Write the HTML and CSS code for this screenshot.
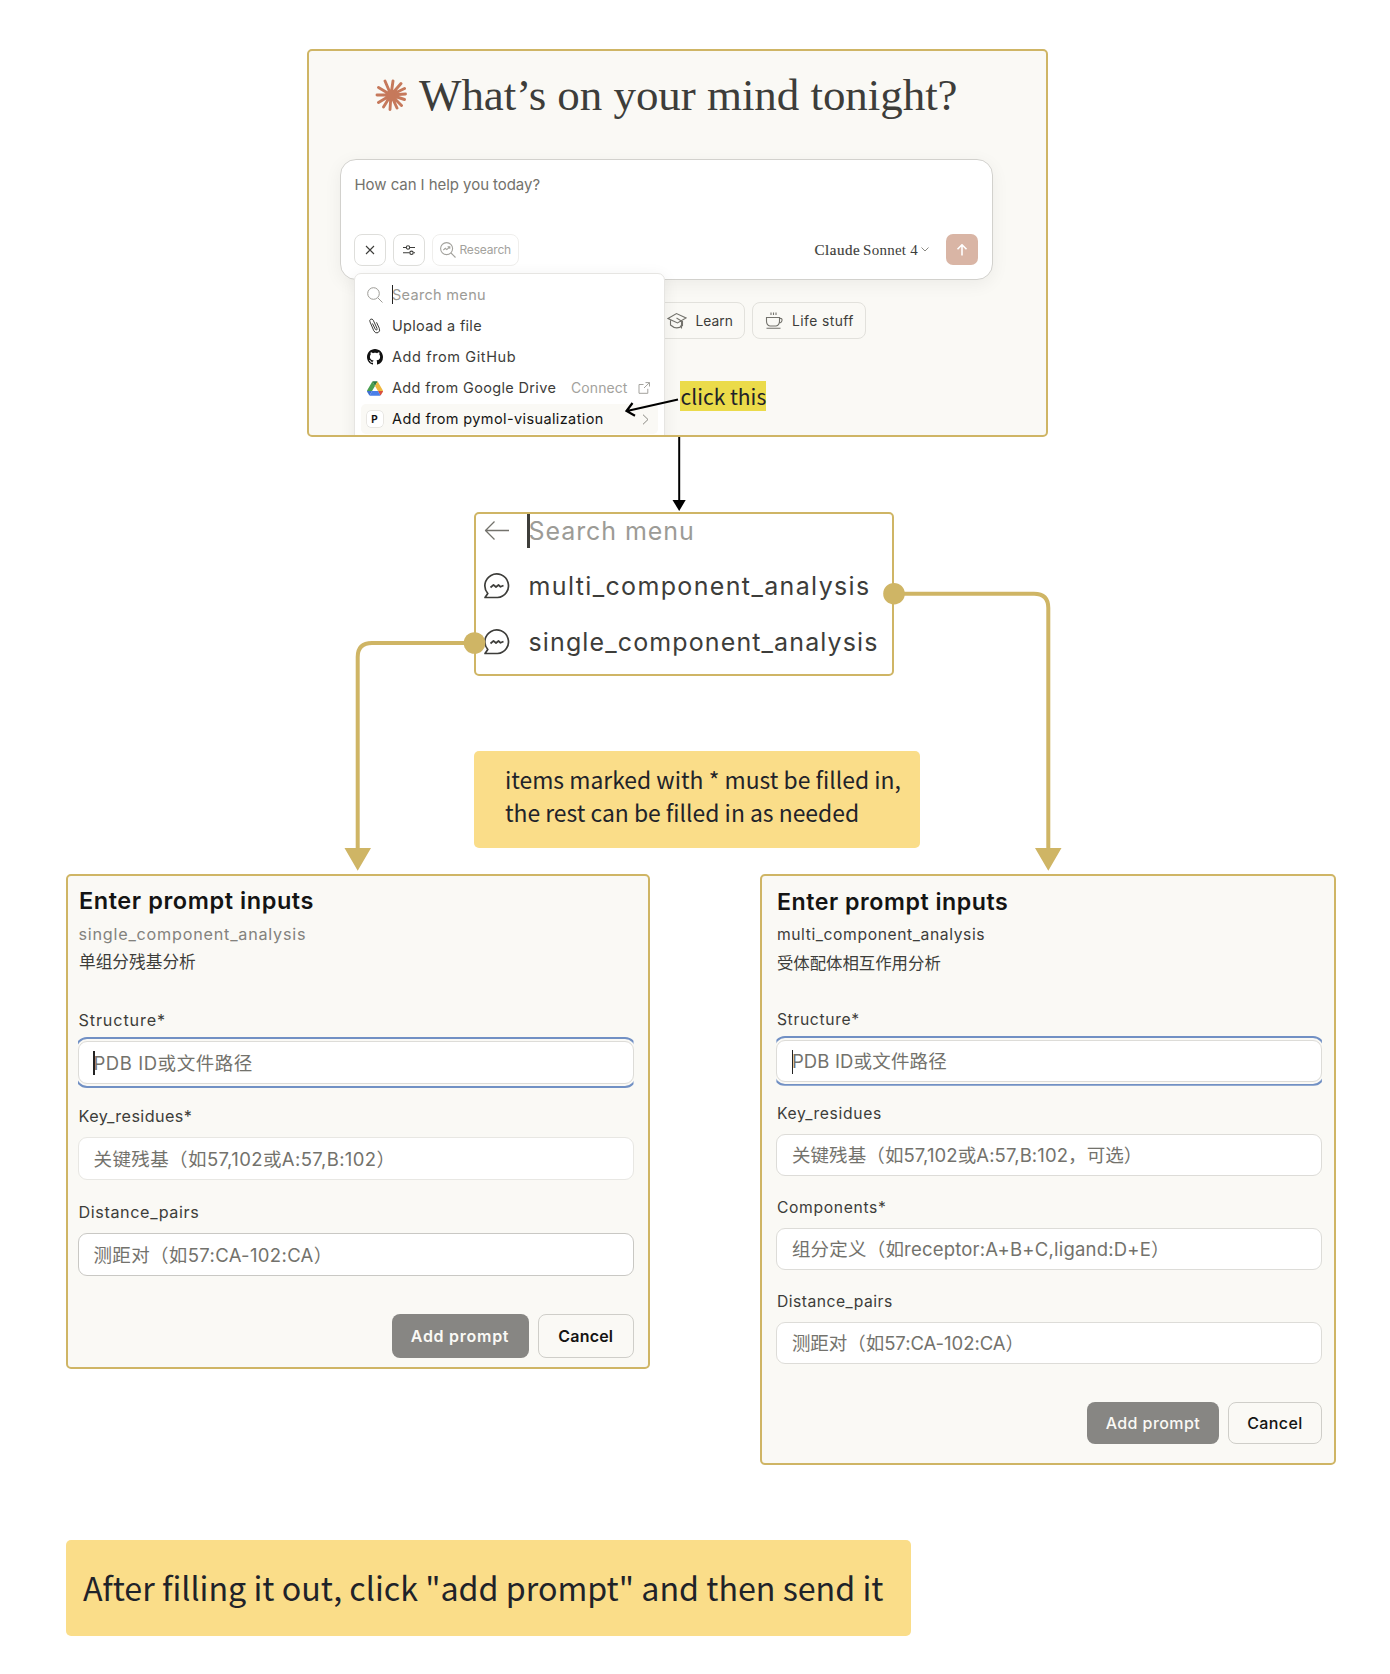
FILE: index.html
```html
<!DOCTYPE html>
<html lang="en">
<head>
<meta charset="utf-8">
<title>Prompt guide</title>
<link rel="stylesheet" href="styles.css">
</head>
<body>
<main class="canvas">
  <section class="node chat">
    <h1 class="greeting">
      <svg class="burst" viewBox="-16 -16 32 32" width="32" height="32" stroke="#c6795b" stroke-width="2.9" stroke-linecap="round"><path d="M0 0L-6-14M0 0L2-14M0 0L10-11.500M0 0L13.500-6.500M0 0L14.500-1M0 0L13.500 4.500M0 0L10.500 10.500M0 0L6 13M0 0L-1 14.500M0 0L-7.500 12M0 0L-12.500 7.500M0 0L-14 0M0 0L-12.500-7.500" /><circle r="4" fill="#c6795b" stroke="none"/></svg>
      <span class="t-greet">What’s on your mind tonight?</span>
    </h1>
    <div class="composer">
      <div class="ask"><span class="t-ask">How can I help you today?</span></div>
      <div class="tools">
        <span class="tool"><svg viewBox="0 0 12 12" width="12" height="12"><path d="M2 2L10 10M10 2L2 10"/></svg></span>
        <span class="tool"><svg viewBox="0 0 14 12" width="14" height="12"><path d="M1 3.500H4M8 3.500H13M1 8.800H7.500M11.500 8.800H13"/><circle cx="6" cy="3.500" r="1.700"/><circle cx="9.500" cy="8.800" r="1.700"/></svg></span>
        <span class="tool research"><svg viewBox="0 0 16 16" width="16" height="16"><circle cx="6.600" cy="6.600" r="6"/><path d="M11 11L15.500 15.500M3.300 8.200L5.300 6.300L6.800 7.600L9.600 5M7.600 4.700H9.800V6.800"/></svg><span class="t-research">Research</span></span>
        <span class="model"><span class="t-claude">Claude</span><span class="t-sonnet">Sonnet 4</span><svg viewBox="0 0 8 5" width="8" height="5"><path d="M.5.5L4 4L7.500.5"/></svg></span>
        <span class="send"><svg viewBox="0 0 12 12" width="12" height="12"><path d="M6 11.500V1M1.500 5.300L6 .8L10.500 5.300"/></svg></span>
      </div>
    </div>
    <div class="chips">
      <span class="chip learn"><svg viewBox="0 0 20 18" width="20" height="18"><path d="M1 6.500L9.500 1.500L19 6L10.500 11ZM3.500 8.500V13Q9.500 18.500 15.500 13.500V9M9.500 6L14.500 9V16.500M13.500 13.500V15.500"/></svg><span class="t-learn">Learn</span></span>
      <span class="chip"><svg viewBox="0 0 18 17" width="18" height="17"><path d="M1.500 5.500H14.500V9Q14.500 13.500 11 14H5Q1.500 13.500 1.500 9ZM14.500 6.500Q17.500 6 17 8.500Q16.500 11 14 11M1.500 16.200H15.500M6 .5V3M8.500.5V3M11 .5V3"/></svg><span class="t-life">Life stuff</span></span>
    </div>
    <div class="menu">
      <div class="item search"><svg viewBox="0 0 16 16" width="16" height="16"><circle cx="6.500" cy="6.500" r="5.800"/><path d="M10.800 10.800L15.500 15.500"/></svg><i class="caret"></i><span class="t-search">Search menu</span></div>
      <div class="item"><svg viewBox="0 0 16 16" width="16" height="16"><path d="M5.500 5.500L8.300 11.300Q8.900 12.300 9.700 11.900Q10.400 11.400 10 10.400L6.300 2.300Q5.300.4 3.700 1.200Q2.200 2 3 3.900L6.800 12.800Q8.400 15.800 11 14.700Q13.500 13.300 12.300 10.300L9.500 4.300"/></svg><span class="t-upload">Upload a file</span></div>
      <div class="item"><svg class="solid" viewBox="0 0 16 16" width="16" height="16"><path d="M8 0C3.580 0 0 3.580 0 8c0 3.540 2.290 6.530 5.470 7.590.4.070.55-.17.55-.38 0-.19-.01-.82-.01-1.490-2.010.37-2.530-.49-2.690-.94-.09-.23-.48-.94-.82-1.130-.28-.15-.68-.52-.01-.53.63-.01 1.080.58 1.230.82.72 1.210 1.870.87 2.330.66.07-.52.28-.87.51-1.070-1.780-.2-3.640-.89-3.640-3.950 0-.87.31-1.590.82-2.150-.08-.2-.36-1.020.08-2.120 0 0 .67-.21 2.200.82.64-.18 1.320-.27 2-.27s1.360.09 2 .27c1.530-1.040 2.200-.82 2.200-.82.44 1.100.16 1.920.08 2.120.51.56.82 1.270.82 2.150 0 3.070-1.870 3.750-3.650 3.950.29.25.54.73.54 1.480 0 1.070-.01 1.930-.01 2.200 0 .21.15.46.55.38A8.010 8.010 0 0 0 16 8c0-4.420-3.580-8-8-8z"/></svg><span class="t-github">Add from GitHub</span></div>
      <div class="item"><svg class="drive" viewBox="0 0 87.300 78" width="16" height="15"><path d="m6.600 66.850 3.850 6.650c.8 1.400 1.950 2.500 3.300 3.300l13.750-23.800h-27.500c0 1.550.4 3.100 1.200 4.500z" fill="#3f6fd0"/><path d="m43.650 25-13.750-23.800c-1.350.8-2.500 1.900-3.300 3.300l-25.400 44a9 9 0 0 0-1.200 4.500h27.500z" fill="#4a9f50"/><path d="m73.550 76.800c1.350-.8 2.500-1.900 3.300-3.300l1.600-2.750 7.650-13.250c.8-1.400 1.200-2.950 1.200-4.500h-27.500l5.850 11.500z" fill="#d9503f"/><path d="m43.650 25 13.750-23.800c-1.350-.8-2.900-1.200-4.500-1.200h-18.500c-1.600 0-3.150.45-4.500 1.200z" fill="#2c7a3f"/><path d="m59.800 53h-32.300l-13.750 23.800c1.350.8 2.900 1.200 4.500 1.200h50.800c1.600 0 3.150-.45 4.500-1.200z" fill="#4a7fe8"/><path d="m73.400 26.500-12.700-22c-.8-1.400-1.950-2.500-3.300-3.300l-13.750 23.800 16.150 28h27.450c0-1.550-.4-3.100-1.200-4.500z" fill="#eeb83f"/></svg><span class="t-drive">Add from Google Drive</span><span class="connect"><span class="t-connect">Connect</span><svg viewBox="0 0 12 12" width="12" height="12"><path d="M5.500 2.500H1V11.300H9.800V6.800M7.500.6H11.500V4.500M11.500.6L6 6"/></svg></span></div>
      <div class="item active"><b class="pbox">P</b><span class="t-pymol">Add from pymol-visualization</span><svg class="go" viewBox="0 0 7 11" width="7" height="11"><path d="M1 .7L6 5.500L1 10.300"/></svg></div>
    </div>
  </section>

  <p class="click">click this</p>

  <section class="node picker">
    <div class="row dim"><svg viewBox="0 0 26 26" width="26" height="26"><path d="M25 12.500H1.500M10.500 3.500L1.500 12.500L10.500 21.500"/></svg><i class="caret big"></i><span class="t-search2">Search menu</span></div>
    <div class="row"><svg viewBox="0 0 26 26" width="26" height="26"><path d="M1 24.500L3.800 20.500A11.800 11.800 0 1 1 13.500 24.500ZM6.500 14.500L9.500 11.800L12 14L14.500 12L16.500 13.800L19.500 12.500"/></svg><span class="t-multi">multi_component_analysis</span></div>
    <div class="row"><svg viewBox="0 0 26 26" width="26" height="26"><path d="M1 24.500L3.800 20.500A11.800 11.800 0 1 1 13.500 24.500ZM6.500 14.500L9.500 11.800L12 14L14.500 12L16.500 13.800L19.500 12.500"/></svg><span class="t-single">single_component_analysis</span></div>
  </section>

  <p class="note hint">items marked with * must be filled in,<br>the rest can be filled in as needed</p>

  <section class="node form left">
    <h2><span class="l-title">Enter prompt inputs</span></h2>
    <p class="name muted"><span class="l-name">single_component_analysis</span></p>
    <p class="desc">单组分残基分析</p>
    <div class="field"><label><span class="l-f1">Structure*</span></label><div class="input focus"><i class="caret"></i><span class="l-p1">PDB ID或文件路径</span></div></div>
    <div class="field"><label><span class="l-f2">Key_residues*</span></label><div class="input faint"><span class="l-p2">关键残基（如57,102或A:57,B:102）</span></div></div>
    <div class="field"><label><span class="l-f3">Distance_pairs</span></label><div class="input strong"><span class="l-p3">测距对（如57:CA-102:CA）</span></div></div>
    <div class="actions"><span class="btn primary"><span class="l-add">Add prompt</span></span><span class="btn"><span class="l-cancel">Cancel</span></span></div>
  </section>

  <section class="node form right">
    <h2><span class="r-title">Enter prompt inputs</span></h2>
    <p class="name"><span class="r-name">multi_component_analysis</span></p>
    <p class="desc">受体配体相互作用分析</p>
    <div class="field"><label><span class="r-label">Structure*</span></label><div class="input focus"><i class="caret"></i><span class="r-p1">PDB ID或文件路径</span></div></div>
    <div class="field"><label><span class="r-label">Key_residues</span></label><div class="input"><span class="r-p2">关键残基（如57,102或A:57,B:102，可选）</span></div></div>
    <div class="field"><label><span class="r-label">Components*</span></label><div class="input"><span class="r-p3">组分定义（如receptor:A+B+C,ligand:D+E）</span></div></div>
    <div class="field"><label><span class="r-f4">Distance_pairs</span></label><div class="input"><span class="r-p4">测距对（如57:CA-102:CA）</span></div></div>
    <div class="actions"><span class="btn primary"><span class="r-add">Add prompt</span></span><span class="btn"><span class="r-cancel">Cancel</span></span></div>
  </section>

  <p class="note final">After filling it out, click "add prompt" and then send it</p>

  <svg class="wires" width="1390" height="1674" viewBox="0 0 1390 1674">
    <path d="M678 399.500L627 411M632.500 403L626.500 411L635 415.700" stroke="#000" stroke-width="2.200" fill="none"/>
    <path d="M679.200 437V502" stroke="#000" stroke-width="2"/>
    <path d="M672.500 500H685.700L679.200 511Z"/>
    <g fill="none" stroke="#cfb565" stroke-width="4"><path d="M894 593.700H1034Q1048.300 593.700 1048.300 608V850"/><path d="M474.500 643H372Q357.700 643 357.700 657V850"/></g>
    <g fill="#cfb565"><circle cx="894" cy="593.700" r="10.800"/><circle cx="474.500" cy="643" r="10.800"/><path d="M344.500 848H371L357.700 870.700ZM1035 848H1061.500L1048.300 870.700Z"/></g>
  </svg>
</main>
</body>
</html>
```
FILE: styles.css
```css
* { box-sizing: border-box; margin: 0; padding: 0; }
body {
  width: 1390px;
  height: 1674px;
  background: #fff;
  color: #3d3d3a;
  font-family: Inter, "Noto Sans CJK SC", sans-serif;
  overflow: hidden;
}
.canvas { position: relative; width: 1390px; height: 1674px; white-space: nowrap; }
.canvas span { flex-shrink: 0; }
svg { display: block; flex-shrink: 0; }

/* diagram nodes */
.node { position: absolute; border: 2px solid #cfb565; border-radius: 5px; background: #faf9f5; overflow: hidden; }
.wires { position: absolute; left: 0; top: 0; pointer-events: none; }
.caret { display: block; position: absolute; width: 1px; background: #222; }

/* chat card */
.chat { left: 307px; top: 49px; width: 741px; height: 388px; }
.greeting {
  display: flex; align-items: center; gap: 12px;
  height: 56px; margin: 16px 0 0 66px;
  font: 400 45px/56px "Liberation Serif", serif;
}
.t-greet { letter-spacing: -.05px; }
.composer {
  display: flex; flex-direction: column; justify-content: space-between;
  width: 653px; height: 120.500px; margin: 36px 0 0 30.500px; padding: 14px 14px 13px 13.500px;
  border: 1px solid #d2d1cd; border-radius: 16px; background: #fff;
  box-shadow: 0 4px 18px rgba(0,0,0,.06);
}
.ask { padding-left: .5px; font-size: 15px; line-height: 22px; color: #73726c; letter-spacing: -.058px; }
.tools { display: flex; align-items: center; gap: 7px; height: 32px; }
.tools svg, .chips svg { fill: none; stroke: currentColor; stroke-width: 1.1; }
.tool { display: flex; align-items: center; justify-content: center; width: 32px; height: 32px; border: 1px solid #dededb; border-radius: 8px; }
.tools .tool:first-child { margin-left: -.500px; }
.research { width: 87px; justify-content: flex-start; gap: 4px; padding-left: 7px; border-color: #efeeec; color: #a3a29d; font-size: 12px; line-height: 20px; }
.t-research { letter-spacing: -.19px; }
.model { display: flex; align-items: center; margin-left: auto; margin-right: 10px; font-family: "Liberation Serif", serif; font-size: 15px; line-height: 20px; }
.t-claude { -webkit-text-stroke: .2px #3d3d3a; letter-spacing: .5px; }
.t-sonnet { margin: 0 2.500px 0 3px; letter-spacing: .25px; }
.tools .model svg { stroke: #8a8983; stroke-width: 1; }
.send { display: flex; align-items: center; justify-content: center; width: 32px; height: 31px; border-radius: 7px; background: #d9b5a5; color: #fff; }
.tools .send svg { stroke-width: 1.6; }
.chips { display: flex; gap: 7px; margin: 22.500px 0 0 331px; }
.chip { display: flex; align-items: center; width: 114px; height: 36.500px; padding: 1px 0 0 12px; gap: 9px; border: 1px solid #e2e1dc; border-radius: 8px; font-size: 13.800px; line-height: 20px; }
.chip.learn { padding-left: 25.500px; width: 105px; }
.chips svg { color: #73726c; }
.t-life { letter-spacing: .45px; }

.menu {
  position: absolute; left: 45px; top: 222px; width: 310.500px; height: 180px; padding: 6px;
  border: 1px solid #e6e5e2; border-radius: 7px; background: #fff; box-shadow: 0 3px 16px rgba(0,0,0,.07);
}
.item { position: relative; display: flex; align-items: center; gap: 9.500px; height: 30.900px; padding: 0 5px 0 5.500px; border-radius: 5px; font-size: 14.500px; line-height: 22px; }
.item svg { fill: none; stroke: currentColor; stroke-width: 1; }
.item .solid { fill: #111; stroke: none; }
.item .drive { stroke: none; }
.item.search { color: #9c9b96; }
.search .caret { left: 31px; top: 5px; height: 19px; }
.t-search { letter-spacing: .309px; }
.t-upload { letter-spacing: .286px; }
.t-github { letter-spacing: .6px; }
.t-drive { letter-spacing: .341px; }
.t-pymol { letter-spacing: .384px; }
.connect { display: flex; align-items: center; gap: 10.500px; margin-left: auto; margin-right: 2.500px; color: #a3a29d; font-size: 14px; letter-spacing: .085px; }
.item.active { background: #faf9f5; color: #141413; }
.item .go { margin-left: auto; margin-right: 4px; color: #8a8983; }
.pbox { width: 16px; height: 16px; border-radius: 4px; background: #fff; box-shadow: 0 0 0 .5px #d5d4d0; font-size: 10px; line-height: 16px; text-align: center; }
.click { position: absolute; left: 680px; top: 381px; width: 85.500px; height: 30px; padding-left: .5px; background: #ebdb4a; color: #1f2329; font: 400 21px/30px "Noto Sans CJK SC", sans-serif; }

/* submenu */
.picker { left: 474px; top: 511.500px; width: 420px; height: 164px; background: #fff; }
.row { position: relative; display: flex; align-items: center; gap: 18.500px; height: 55.500px; padding-left: 8px; font-size: 25px; line-height: 32px; }
.row svg { fill: none; stroke: currentColor; stroke-width: 1.7; stroke-linejoin: round; }
.row.dim { margin-top: -10.400px; color: #9c9b96; }
.row.dim svg { color: #73726c; stroke-width: 1.3; }
.t-search2 { letter-spacing: .93px; }
.t-multi { letter-spacing: 1.36px; }
.t-single { letter-spacing: 1.12px; }
.caret.big { left: 51px; top: 11px; width: 3px; height: 34px; background: #3d3d3a; }

/* sticky notes */
.note { position: absolute; border-radius: 5px; background: #fadd89; color: #1f2329; font-family: "Noto Sans CJK SC", sans-serif; }
.hint { left: 474.400px; top: 750.500px; width: 445.500px; height: 97px; padding: 12px 0 0 30.500px; font-size: 22.900px; line-height: 33.300px; }
.final { left: 66px; top: 1539.500px; width: 845px; height: 96.500px; padding: 23.500px 0 0 17px; font-size: 32.230px; line-height: 48px; }

/* prompt forms */
.form h2 { height: 30px; font-weight: 600; font-size: 23.500px; line-height: 30px; color: #141413; }
.form p { line-height: 24px; height: 24px; font-size: 15.700px; }
.form .muted { color: #83827d; }
.form label { display: block; height: 24px; line-height: 24px; font-size: 15.700px; }
.left { left: 66px; top: 874px; width: 584px; height: 495px; padding: 9.500px 14.500px 0 10px; }
.left .name { margin-top: 6.300px; font-size: 16.200px; letter-spacing: .77px; }
.left .desc { margin: 4.700px 0 33.800px; font-size: 16.700px; }
.right .desc { margin: 4px 0 32.500px; font-size: 16.400px; }
.left label { font-size: 16.200px; }
.field label, .form p, .form h2 { padding-left: .5px; }
.left h2, .left .desc { padding-left: 1px; }
.left .field { height: 96px; }
.input { position: relative; display: flex; align-items: center; height: 43.500px; margin-top: 8.500px; padding-left: 14.500px; border: 1px solid #dddcd8; border-radius: 9px; background: #fff; color: #73726c; font-size: 18.500px; line-height: 28px; }
.faint { border-color: #e8e7e3; }
.strong { border-color: #c9c8c4; }
.focus::before { content: ""; position: absolute; inset: -5px -4px; border: 2px solid #7190c4; border-radius: 12px; clip-path: inset(0 3px); }
.input .caret { left: 14px; top: 9px; height: 24px; width: 1.500px; }
.right .input .caret { left: 14.500px; width: 1px; }
.l-title { letter-spacing: .566px; }
.l-f1 { letter-spacing: .86px; }
.l-f2 { letter-spacing: .42px; }
.l-f3 { letter-spacing: .6px; }
.l-p1 { letter-spacing: .55px; }
.l-p2 { letter-spacing: .4px; }
.l-p3 { letter-spacing: .34px; }
.l-add { letter-spacing: .733px; }
.l-cancel { letter-spacing: .211px; }
.r-title { letter-spacing: .539px; }
.r-name { letter-spacing: .59px; }
.r-label { letter-spacing: .65px; }
.r-f4 { letter-spacing: .49px; }
.r-p1 { letter-spacing: .15px; }
.r-p2 { letter-spacing: .1px; }
.r-p3 { letter-spacing: .2px; }
.r-p4 { letter-spacing: -.05px; }
.r-add { letter-spacing: .425px; }
.r-cancel { letter-spacing: .398px; }
.actions { display: flex; justify-content: flex-end; gap: 9.500px; margin-top: 17.300px; }
.btn { display: flex; align-items: center; justify-content: center; width: 95.500px; height: 44px; border: 1px solid #cfcec9; border-radius: 8px; color: #141413; font-weight: 600; font-size: 16px; line-height: 24px; }
.btn.primary { width: 137px; border: 0; background: #878683; color: #faf9f5; }
.right { left: 760.400px; top: 874px; width: 575.500px; height: 590.500px; padding: 10.500px 12px 0 14px; }
.right h2 { font-size: 23.200px; }
.right .name { margin-top: 6.500px; }
.right .field { height: 94px; }
.right .input { height: 42px; margin-top: 8.300px; }
.right .actions { margin-top: 18px; gap: 9px; }
.right .btn { width: 94px; height: 42px; font-weight: 500; }
.right .btn.primary { width: 132px; }
```
